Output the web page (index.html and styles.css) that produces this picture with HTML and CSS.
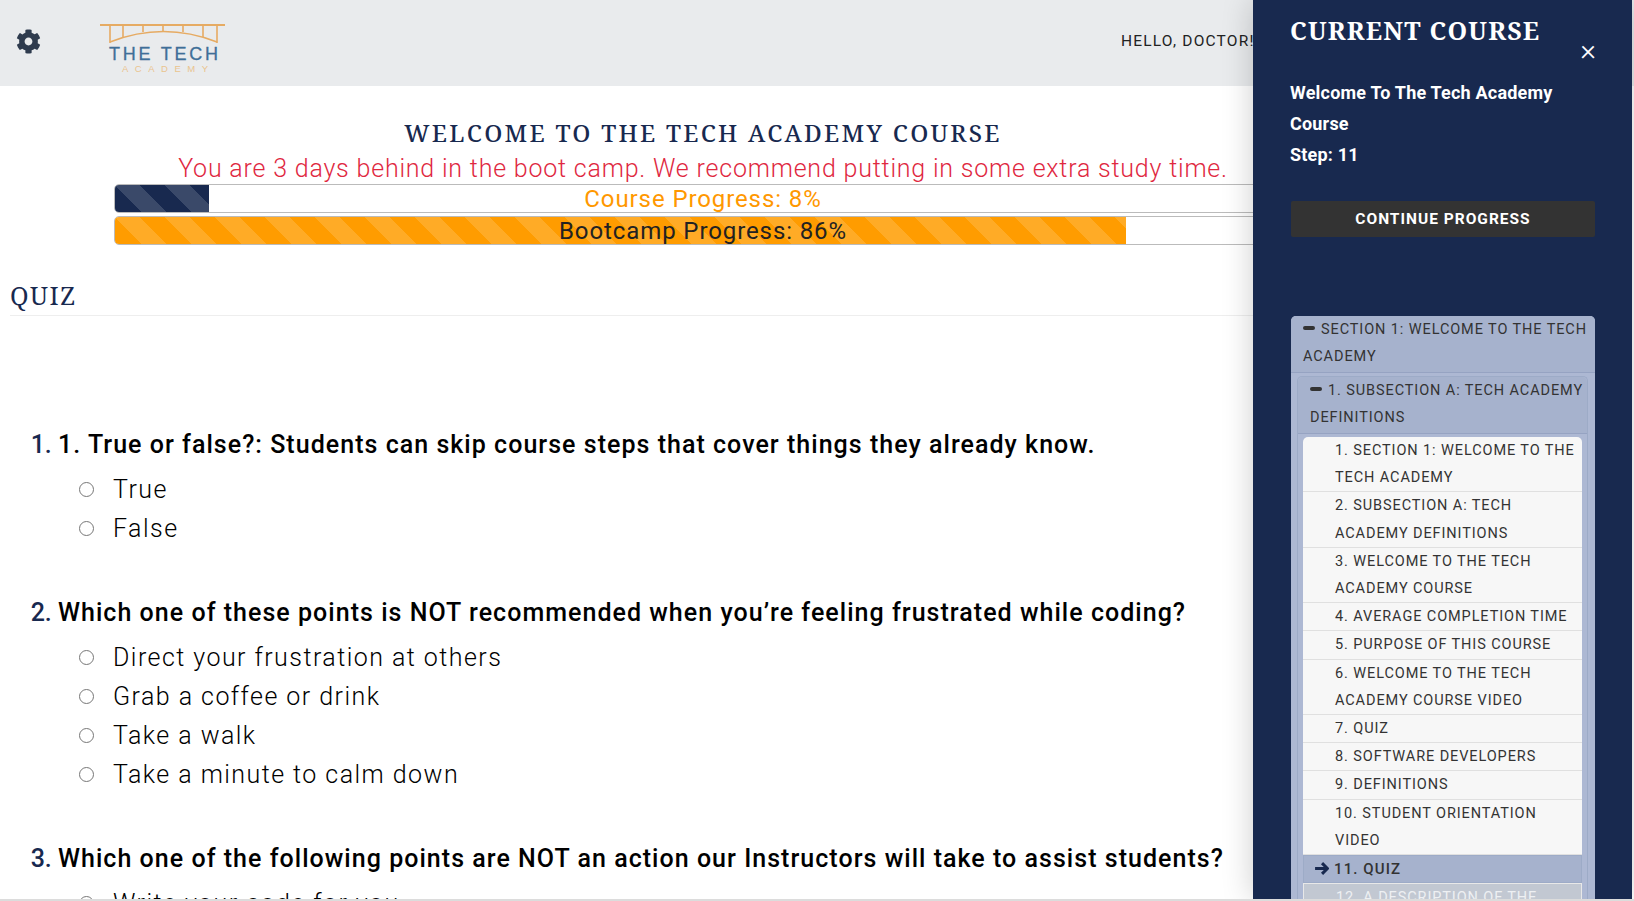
FILE: index.html
```html
<!DOCTYPE html>
<html>
  <head>
    <meta charset="UTF-8">
    <title>Quiz - The Tech Academy</title>
    <link rel="stylesheet" href="styles.css">
  </head>
  <body>
    <div class="page">
      <header class="topbar">
        <svg class="gear" viewBox="0 0 512 512"><path d="M487.4 315.7l-42.6-24.6c4.3-23.2 4.3-47 0-70.2l42.6-24.6c4.9-2.8 7.1-8.6 5.5-14-11.1-35.6-30-67.8-54.7-94.6-3.8-4.1-10-5.1-14.8-2.3L380.8 110c-17.9-15.4-38.5-27.3-60.8-35.1V25.8c0-5.6-3.9-10.5-9.4-11.7-36.7-8.2-74.3-7.8-109.2 0-5.5 1.2-9.4 6.1-9.4 11.7V75c-22.2 7.9-42.8 19.8-60.8 35.1L88.7 85.5c-4.9-2.8-11-1.9-14.8 2.3-24.7 26.7-43.6 58.9-54.7 94.6-1.7 5.4.6 11.2 5.5 14L67.3 221c-4.3 23.2-4.3 47 0 70.2l-42.6 24.6c-4.9 2.8-7.1 8.6-5.5 14 11.1 35.6 30 67.8 54.7 94.6 3.8 4.1 10 5.1 14.8 2.3l42.6-24.6c17.9 15.4 38.5 27.3 60.8 35.1v49.2c0 5.6 3.9 10.5 9.4 11.7 36.7 8.2 74.3 7.8 109.2 0 5.5-1.2 9.4-6.1 9.4-11.7v-49.2c22.2-7.9 42.8-19.8 60.8-35.1l42.6 24.6c4.9 2.8 11 1.9 14.8-2.3 24.7-26.7 43.6-58.9 54.7-94.6 1.5-5.5-.7-11.3-5.6-14.1zM256 336c-44.1 0-80-35.9-80-80s35.9-80 80-80 80 35.9 80 80-35.9 80-80 80z"/></svg>
        <svg class="logo" viewBox="0 0 125 50">
          <g fill="none" stroke="#e6ab63" stroke-width="1.6">
            <path d="M0 1h125" stroke-width="2"/>
            <path d="M10 1v18M23 1v12M43 1v7M63 1v6M83 1v7M103 1v12M117 1v18"/>
            <path d="M10 18Q63.5 -3 117 18"/>
          </g>
          <text class="logo-main" x="9" y="36" textLength="109" lengthAdjust="spacing">THE TECH</text>
          <text class="logo-sub" x="22" y="48" textLength="86" lengthAdjust="spacing">ACADEMY</text>
        </svg>
        <span class="hello">HELLO, DOCTOR!</span>
      </header>

      <main class="content">
        <h1 class="course-title">WELCOME TO THE TECH ACADEMY COURSE</h1>
        <p class="behind">You are 3 days behind in the boot camp. We recommend putting in some extra study time.</p>
        <div class="bar bar-course">
          <div class="bar-fill" style="width: 8%"></div>
          <span class="bar-label">Course Progress: 8%</span>
        </div>
        <div class="bar bar-camp">
          <div class="bar-fill" style="width: 86%"></div>
          <span class="bar-label">Bootcamp Progress: 86%</span>
        </div>

        <h2 class="quiz-title">QUIZ</h2>

        <ol class="questions">
          <li>
            <p class="question">1. True or false?: Students can skip course steps that cover things they already know.</p>
            <label class="option"><input type="radio" name="q1"><span>True</span></label>
            <label class="option"><input type="radio" name="q1"><span>False</span></label>
          </li>
          <li>
            <p class="question">Which one of these points is NOT recommended when you’re feeling frustrated while coding?</p>
            <label class="option"><input type="radio" name="q2"><span>Direct your frustration at others</span></label>
            <label class="option"><input type="radio" name="q2"><span>Grab a coffee or drink</span></label>
            <label class="option"><input type="radio" name="q2"><span>Take a walk</span></label>
            <label class="option"><input type="radio" name="q2"><span>Take a minute to calm down</span></label>
          </li>
          <li>
            <p class="question">Which one of the following points are NOT an action our Instructors will take to assist students?</p>
            <label class="option"><input type="radio" name="q3"><span>Write your code for you</span></label>
          </li>
        </ol>
      </main>

      <aside class="sidebar">
        <h2 class="side-title">CURRENT COURSE</h2>
        <span class="side-close">&times;</span>
        <p class="side-info">Welcome To The Tech Academy Course<br>Step: 11</p>
        <button class="continue" type="button">CONTINUE PROGRESS</button>

        <div class="panel">
          <div class="panel-head"><span class="minus"></span>SECTION 1: WELCOME TO THE TECH ACADEMY</div>
          <div class="panel-body">
            <div class="panel panel-sub">
              <div class="panel-head"><span class="minus"></span>1. SUBSECTION A: TECH ACADEMY DEFINITIONS</div>
              <ul class="steps">
                <li>1. SECTION 1: WELCOME TO THE TECH ACADEMY</li>
                <li>2. SUBSECTION A: TECH ACADEMY DEFINITIONS</li>
                <li>3. WELCOME TO THE TECH ACADEMY COURSE</li>
                <li>4. AVERAGE COMPLETION TIME</li>
                <li>5. PURPOSE OF THIS COURSE</li>
                <li>6. WELCOME TO THE TECH ACADEMY COURSE VIDEO</li>
                <li>7. QUIZ</li>
                <li>8. SOFTWARE DEVELOPERS</li>
                <li>9. DEFINITIONS</li>
                <li>10. STUDENT ORIENTATION VIDEO</li>
                <li class="current">
                  <svg class="arrow" viewBox="0 0 14 12"><path d="M7.5 1l5 5-5 5M1 6h11" fill="none" stroke="#18294f" stroke-width="2.8"/></svg>11. QUIZ
                </li>
                <li class="locked">12. A DESCRIPTION OF THE TECH ACADEMY</li>
              </ul>
            </div>
          </div>
        </div>
      </aside>
    </div>
  </body>
</html>
```

FILE: styles.css
```css
html, body {
	margin: 0;
	padding: 0;
	height: 100%;
	overflow: hidden;
	background-color: #fff;
}

body {
	font-family: Roboto, "Liberation Sans", sans-serif;
	color: #000;
}

.page {
	position: relative;
	height: 899px;
	overflow: hidden;
	border-bottom: 2px solid #dcdcdc;
}

/* top bar */
.topbar {
	display: flex;
	align-items: center;
	height: 86px;
	background-color: #e9ebed;
	padding-left: 16px;
}

.gear {
	width: 25px;
	height: 25px;
	margin-top: -4px;
	fill: #2e3b4e;
}

.logo {
	width: 125px;
	height: 50px;
	margin-left: 59px;
	margin-top: 11px;
	overflow: visible;
}

.logo-main {
	font-family: "Liberation Sans", sans-serif;
	font-size: 18px;
	fill: #3f6f98;
	stroke: #3f6f98;
	stroke-width: 0.3;
}

.logo-sub {
	font-family: "Liberation Sans", sans-serif;
	font-size: 9.5px;
	fill: #e9c48f;
}

.hello {
	margin-left: 896px;
	margin-top: -4px;
	font-size: 15.5px;
	letter-spacing: 1.2px;
	white-space: nowrap;
	color: #222;
}

/* main column */
.content {
	width: 1406px;
}

.course-title {
	margin: 32px 0 0;
	font-family: "Noto Serif", "DejaVu Serif", serif;
	font-size: 24px;
	font-weight: 500;
	line-height: 30px;
	letter-spacing: 2.3px;
	text-align: center;
	color: #18294f;
}

.behind {
	margin: 0;
	padding-top: 6px;
	font-size: 25px;
	font-weight: 300;
	line-height: 30px;
	letter-spacing: 0.8px;
	text-align: center;
	color: #e0283f;
}

.bar {
	position: relative;
	box-sizing: border-box;
	width: 1178px;
	height: 29px;
	margin: 0 auto 3px;
	border: 1px solid #bbb;
	border-radius: 5px;
	overflow: hidden;
	text-align: center;
}

.bar-fill {
	position: absolute;
	top: 0;
	left: 0;
	bottom: 0;
	background-image: linear-gradient(45deg, rgba(255,255,255,.15) 25%, transparent 25%, transparent 50%, rgba(255,255,255,.15) 50%, rgba(255,255,255,.15) 75%, transparent 75%);
	background-size: 50px 50px;
}

.bar-label {
	position: relative;
	font-size: 24px;
	line-height: 29px;
	letter-spacing: 0.9px;
}

.bar-course .bar-fill {
	background-color: #18294f;
}

.bar-course .bar-label {
	color: #ff9800;
}

.bar-camp .bar-fill {
	background-color: #ff9c00;
}

.bar-camp .bar-label {
	color: #222;
}

.quiz-title {
	margin: 31px 0 0 10px;
	padding-bottom: 1px;
	border-bottom: 1px solid #eee;
	font-family: "Noto Serif", "DejaVu Serif", serif;
	font-size: 25px;
	font-weight: 400;
	line-height: 38px;
	letter-spacing: 1.5px;
	color: #18294f;
}

/* questions */
.questions {
	margin: 111px 0 0;
	padding: 0 0 0 58px;
	color: #18294f;
	font-size: 25px;
	font-weight: 500;
}

.questions > li {
	margin-bottom: 47.5px;
}

.question {
	margin: 0 0 6.5px;
	line-height: 36px;
	letter-spacing: 1.03px;
	color: #000;
}

.option {
	display: flex;
	align-items: center;
	height: 39px;
	margin-left: 21px;
	font-size: 25px;
	font-weight: 300;
	letter-spacing: 1.45px;
	color: #000;
}

.option input {
	width: 15px;
	height: 15px;
	margin: 0 19px 0 0;
}

/* sidebar */
.sidebar {
	position: absolute;
	top: 0;
	right: 2px;
	bottom: 0;
	box-sizing: border-box;
	width: 379px;
	padding: 0 37px 0 38px;
	overflow: hidden;
	background-color: #18294f;
	box-shadow: 0 0 30px rgba(0,0,0,.2);
	color: #fff;
}

.side-title {
	margin: 12px 0 0 -1px;
	font-family: "Noto Serif", "DejaVu Serif", serif;
	font-size: 25px;
	font-weight: 700;
	line-height: 36px;
	letter-spacing: 1.2px;
}

.side-close {
	position: absolute;
	top: 35px;
	right: 36px;
	font-size: 30px;
	font-weight: 300;
	line-height: 30px;
}

.side-info {
	margin: 29px 0 0 -1px;
	font-size: 18px;
	font-weight: 700;
	line-height: 31px;
	letter-spacing: 0.2px;
}

.continue {
	display: block;
	width: 100%;
	height: 36px;
	margin-top: 31px;
	border: none;
	border-radius: 2px;
	background-color: #333;
	color: #fff;
	font-family: Roboto, sans-serif;
	font-size: 15.5px;
	font-weight: 700;
	letter-spacing: 1px;
}

.panel {
	margin-top: 79px;
	border-radius: 5px 5px 0 0;
	background-color: #adb8d3;
	color: #333;
	font-size: 14.5px;
	letter-spacing: 0.9px;
}

.panel-head {
	padding: 0 5px 2px 12px;
	line-height: 27px;
	background-color: #a6b2cd;
	border-bottom: 1px solid #96a3c2;
	border-radius: 5px 5px 0 0;
}

.panel-body {
	padding: 3px 7px 0 6px;
}

.panel-sub {
	margin-top: 0;
	border: 1px solid #9dabc7;
	border-bottom: none;
}

.panel-sub .panel-head {
	padding-right: 0;
}

.minus {
	display: inline-block;
	width: 12px;
	height: 4px;
	margin-right: 6px;
	vertical-align: 4px;
	background-color: #333;
	border-radius: 2px;
}

.steps {
	margin: 0;
	padding: 3px 5px 0;
	list-style: none;
}

.steps li {
	padding: 0 4px 0 32px;
	border-bottom: 1px solid #e0e0e0;
	line-height: 27.2px;
	background-color: #f7f7f7;
}

.steps li:first-child {
	border-radius: 5px 5px 0 0;
}

.steps .current {
	padding-left: 11px;
	background-color: #a6b2cd;
	border-bottom: none;
	font-size: 15px;
	font-weight: 500;
	line-height: 28px;
	letter-spacing: 1.1px;
	box-shadow: inset 0 0 0 1px #9dabc7;
}

.steps .locked {
	border: 1px solid #e8e8e8;
	background-color: #c2c8d2;
	color: #eef0f3;
}

.arrow {
	width: 15px;
	height: 13px;
	margin-right: 5px;
	vertical-align: -1px;
}
```
